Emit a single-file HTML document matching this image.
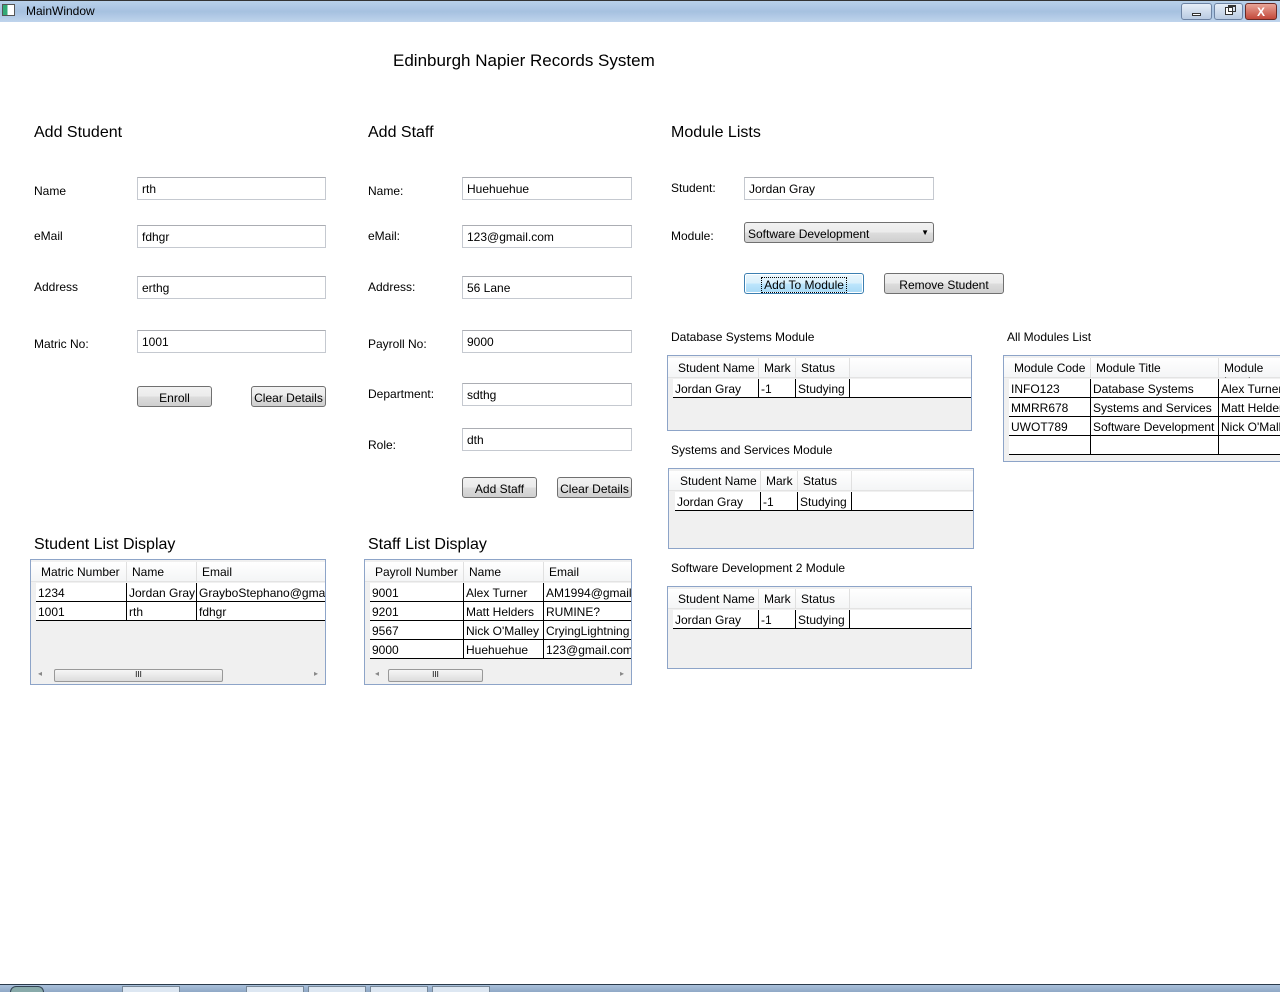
<!DOCTYPE html>
<html><head><meta charset="utf-8"><style>
*{margin:0;padding:0;box-sizing:border-box}
body{width:1280px;height:992px;background:#fff;position:relative;overflow:hidden;font-family:"Liberation Sans",sans-serif;font-size:12px;color:#000}
.a{position:absolute;white-space:nowrap}
.t{position:absolute;border:1px solid #c5c9d0;border-top-color:#abadb3;background:#fff;padding:4px 0 0 4px;height:23px;overflow:hidden}
.b{position:absolute;border:1px solid #707070;border-radius:3px;background:linear-gradient(#f2f2f2,#ebebeb 50%,#dddddd 50%,#cfcfcf);text-align:center;height:21px;padding-top:4px}
.h{font-size:16px;margin-top:1px}
.g{position:absolute;border:1px solid #8da4c8;background:#f0f0f0;overflow:hidden}
.hr{position:absolute;top:2px;height:20px;background:linear-gradient(#fff,#f4f5f6);border-bottom:1px solid #e3e3e3}
.hc{position:absolute;top:0;height:20px;padding:3px 0 0 5px;border-right:1px solid #e0e0e0;overflow:hidden}
.rw{position:absolute;height:19px;background:#fff;border-bottom:1px solid #000}
.dc{position:absolute;top:0;height:18px;padding:3px 0 0 2px;border-right:1px solid #000;overflow:hidden}
.sb{position:absolute;height:15px;background:#f0f0f0}
</style></head><body>
<div class="a" style="left:0;top:0;width:1280px;height:22px;background:linear-gradient(#b9d1ea,#a6c1e0 50%,#bfd4ec);border-top:1px solid #333"></div>
<div class="a" style="left:2px;top:4px;width:13px;height:12px;border:1px solid #555;background:linear-gradient(90deg,#3a7 40%,#fff 40%)"></div>
<div class="a" style="left:26px;top:4px">MainWindow</div>
<div class="a" style="left:1181px;top:3px;width:31px;height:17px;border:1px solid #6d83a3;border-radius:3px;background:linear-gradient(#e6eef8,#b9cbe2)"><div class="a" style="left:10px;top:9px;width:9px;height:3px;background:#fff;border:1px solid #333"></div></div>
<div class="a" style="left:1214px;top:3px;width:29px;height:17px;border:1px solid #6d83a3;border-radius:3px;background:linear-gradient(#e6eef8,#b9cbe2)"><div class="a" style="left:10px;top:3px;width:8px;height:8px;border:1px solid #333;background:#fff"></div><div class="a" style="left:13px;top:1px;width:8px;height:7px;border:1px solid #333;border-top-width:2px"></div></div>
<div class="a" style="left:1245px;top:3px;width:32px;height:17px;border:1px solid #6a2a25;border-radius:3px;background:linear-gradient(#e8a598,#c3493a);color:#fff;text-align:center;font-weight:bold;font-size:12px;padding-top:1px">X</div>

<div class="a h" style="left:393px;top:50px;font-size:17px">Edinburgh Napier Records System</div>

<div class="a h" style="left:34px;top:123px">Add Student</div>
<div class="a h" style="left:368px;top:123px">Add Staff</div>
<div class="a h" style="left:671px;top:123px">Module Lists</div>

<div class="a" style="left:34px;top:184px">Name</div>
<div class="a" style="left:34px;top:229px">eMail</div>
<div class="a" style="left:34px;top:280px">Address</div>
<div class="a" style="left:34px;top:337px">Matric No:</div>
<div class="t" style="left:137px;top:177px;width:189px">rth</div>
<div class="t" style="left:137px;top:225px;width:189px">fdhgr</div>
<div class="t" style="left:137px;top:276px;width:189px">erthg</div>
<div class="t" style="left:137px;top:330px;width:189px">1001</div>
<div class="b" style="left:137px;top:386px;width:75px">Enroll</div>
<div class="b" style="left:251px;top:386px;width:75px">Clear Details</div>

<div class="a" style="left:368px;top:184px">Name:</div>
<div class="a" style="left:368px;top:229px">eMail:</div>
<div class="a" style="left:368px;top:280px">Address:</div>
<div class="a" style="left:368px;top:337px">Payroll No:</div>
<div class="a" style="left:368px;top:387px">Department:</div>
<div class="a" style="left:368px;top:438px">Role:</div>
<div class="t" style="left:462px;top:177px;width:170px">Huehuehue</div>
<div class="t" style="left:462px;top:225px;width:170px">123@gmail.com</div>
<div class="t" style="left:462px;top:276px;width:170px">56 Lane</div>
<div class="t" style="left:462px;top:330px;width:170px">9000</div>
<div class="t" style="left:462px;top:383px;width:170px">sdthg</div>
<div class="t" style="left:462px;top:428px;width:170px">dth</div>
<div class="b" style="left:462px;top:477px;width:75px">Add Staff</div>
<div class="b" style="left:557px;top:477px;width:75px">Clear Details</div>

<div class="a" style="left:671px;top:181px">Student:</div>
<div class="a" style="left:671px;top:229px">Module:</div>
<div class="t" style="left:744px;top:177px;width:190px">Jordan Gray</div>
<div class="a" style="left:744px;top:222px;width:190px;height:21px;border:1px solid #707070;border-radius:3px;background:linear-gradient(#f2f2f2,#ebebeb 50%,#dddddd 50%,#cfcfcf);padding:4px 0 0 3px">Software Development<span style="position:absolute;right:4px;top:5px;font-size:8px">▼</span></div>
<div class="b" style="left:744px;top:273px;width:120px;border-color:#3c7fb1;background:linear-gradient(#eaf6fd,#d9f0fc 50%,#bee6fd 50%,#a7d9f5);box-shadow:inset 0 0 0 1px #fff"><span style="outline:1px dotted #000;padding:0 2px">Add To Module</span></div>
<div class="b" style="left:884px;top:273px;width:120px">Remove Student</div>

<div class="a" style="left:671px;top:330px">Database Systems Module</div>
<div class="a" style="left:671px;top:443px">Systems and Services Module</div>
<div class="a" style="left:671px;top:561px">Software Development 2 Module</div>
<div class="a" style="left:1007px;top:330px">All Modules List</div>

<div class="a h" style="left:34px;top:535px">Student List Display</div>
<div class="a h" style="left:368px;top:535px">Staff List Display</div>

<div class="g" style="left:30px;top:559px;width:296px;height:126px">
 <div class="hr" style="left:0;width:296px"><div class="hc" style="left:5px;width:91px">Matric Number</div><div class="hc" style="left:96px;width:70px">Name</div><div class="hc" style="left:166px;width:130px">Email</div></div>
 <div class="rw" style="left:5px;top:23px;width:291px"><div class="dc" style="left:0;width:91px">1234</div><div class="dc" style="left:91px;width:70px">Jordan Gray</div><div class="dc" style="left:161px;width:135px">GrayboStephano@gmail</div></div>
 <div class="rw" style="left:5px;top:42px;width:291px"><div class="dc" style="left:0;width:91px">1001</div><div class="dc" style="left:91px;width:70px">rth</div><div class="dc" style="left:161px;width:135px">fdhgr</div></div>
 <div class="sb" style="left:4px;top:108px;width:290px"><div class="a" style="left:3px;top:1px;font-size:8px;color:#888">◂</div><div class="a" style="left:19px;top:1px;width:169px;height:13px;border:1px solid #999;border-radius:2px;background:linear-gradient(#f6f6f6,#dcdcdc);text-align:center;font-size:8px">III</div><div class="a" style="left:279px;top:1px;font-size:8px;color:#888">▸</div></div>
</div>

<div class="g" style="left:364px;top:559px;width:268px;height:126px">
 <div class="hr" style="left:0;width:268px"><div class="hc" style="left:5px;width:94px">Payroll Number</div><div class="hc" style="left:99px;width:80px">Name</div><div class="hc" style="left:179px;width:89px">Email</div></div>
 <div class="rw" style="left:5px;top:23px;width:263px"><div class="dc" style="left:0;width:94px">9001</div><div class="dc" style="left:94px;width:80px">Alex Turner</div><div class="dc" style="left:174px;width:89px">AM1994@gmail</div></div>
 <div class="rw" style="left:5px;top:42px;width:263px"><div class="dc" style="left:0;width:94px">9201</div><div class="dc" style="left:94px;width:80px">Matt Helders</div><div class="dc" style="left:174px;width:89px">RUMINE?@gmail</div></div>
 <div class="rw" style="left:5px;top:61px;width:263px"><div class="dc" style="left:0;width:94px">9567</div><div class="dc" style="left:94px;width:80px">Nick O'Malley</div><div class="dc" style="left:174px;width:89px">CryingLightning</div></div>
 <div class="rw" style="left:5px;top:80px;width:263px"><div class="dc" style="left:0;width:94px">9000</div><div class="dc" style="left:94px;width:80px">Huehuehue</div><div class="dc" style="left:174px;width:89px">123@gmail.com</div></div>
 <div class="sb" style="left:4px;top:108px;width:262px"><div class="a" style="left:6px;top:1px;font-size:8px;color:#888">◂</div><div class="a" style="left:19px;top:1px;width:95px;height:13px;border:1px solid #999;border-radius:2px;background:linear-gradient(#f6f6f6,#dcdcdc);text-align:center;font-size:8px">III</div><div class="a" style="left:251px;top:1px;font-size:8px;color:#888">▸</div></div>
</div>

<div class="g" style="left:667px;top:355px;width:305px;height:76px">
 <div class="hr" style="left:0;width:305px"><div class="hc" style="left:5px;width:86px">Student Name</div><div class="hc" style="left:91px;width:37px">Mark</div><div class="hc" style="left:128px;width:54px">Status</div></div>
 <div class="rw" style="left:5px;top:23px;width:300px"><div class="dc" style="left:0;width:86px">Jordan Gray</div><div class="dc" style="left:86px;width:37px">-1</div><div class="dc" style="left:123px;width:54px">Studying</div></div>
</div>
<div class="g" style="left:668px;top:468px;width:306px;height:81px">
 <div class="hr" style="left:0;width:306px"><div class="hc" style="left:6px;width:86px">Student Name</div><div class="hc" style="left:92px;width:37px">Mark</div><div class="hc" style="left:129px;width:54px">Status</div></div>
 <div class="rw" style="left:6px;top:23px;width:300px"><div class="dc" style="left:0;width:86px">Jordan Gray</div><div class="dc" style="left:86px;width:37px">-1</div><div class="dc" style="left:123px;width:54px">Studying</div></div>
</div>
<div class="g" style="left:667px;top:586px;width:305px;height:83px">
 <div class="hr" style="left:0;width:305px"><div class="hc" style="left:5px;width:86px">Student Name</div><div class="hc" style="left:91px;width:37px">Mark</div><div class="hc" style="left:128px;width:54px">Status</div></div>
 <div class="rw" style="left:5px;top:23px;width:300px"><div class="dc" style="left:0;width:86px">Jordan Gray</div><div class="dc" style="left:86px;width:37px">-1</div><div class="dc" style="left:123px;width:54px">Studying</div></div>
</div>
<div class="g" style="left:1003px;top:355px;width:290px;height:107px">
 <div class="hr" style="left:0;width:290px"><div class="hc" style="left:5px;width:82px">Module Code</div><div class="hc" style="left:87px;width:128px">Module Title</div><div class="hc" style="left:215px;width:80px">Module Leader</div></div>
 <div class="rw" style="left:5px;top:23px;width:285px"><div class="dc" style="left:0;width:82px">INFO123</div><div class="dc" style="left:82px;width:128px">Database Systems</div><div class="dc" style="left:210px;width:80px">Alex Turner</div></div>
 <div class="rw" style="left:5px;top:42px;width:285px"><div class="dc" style="left:0;width:82px">MMRR678</div><div class="dc" style="left:82px;width:128px">Systems and Services</div><div class="dc" style="left:210px;width:80px">Matt Helders</div></div>
 <div class="rw" style="left:5px;top:61px;width:285px"><div class="dc" style="left:0;width:82px">UWOT789</div><div class="dc" style="left:82px;width:128px">Software Development</div><div class="dc" style="left:210px;width:80px">Nick O'Malley</div></div>
 <div class="rw" style="left:5px;top:80px;width:285px"><div class="dc" style="left:0;width:82px"></div><div class="dc" style="left:82px;width:128px"></div><div class="dc" style="left:210px;width:80px"></div></div>
</div>

<div class="a" style="left:0;top:984px;width:1280px;height:8px;background:linear-gradient(#2a3a4a 1px,#a9c0da 1px,#8fa8c6);"></div>
<div class="a" style="left:10px;top:986px;width:34px;height:6px;border:1px solid #345;border-bottom:none;border-radius:17px 17px 0 0;background:#8aa"></div>
<div class="a" style="left:122px;top:986px;width:58px;height:6px;background:#dde7f2;border:1px solid #789;border-bottom:none"></div>
<div class="a" style="left:246px;top:986px;width:58px;height:6px;background:#dde7f2;border:1px solid #789;border-bottom:none"></div>
<div class="a" style="left:308px;top:986px;width:58px;height:6px;background:#dde7f2;border:1px solid #789;border-bottom:none"></div>
<div class="a" style="left:370px;top:986px;width:58px;height:6px;background:#dde7f2;border:1px solid #789;border-bottom:none"></div>
<div class="a" style="left:432px;top:986px;width:58px;height:6px;background:#dde7f2;border:1px solid #789;border-bottom:none"></div>
</body></html>
